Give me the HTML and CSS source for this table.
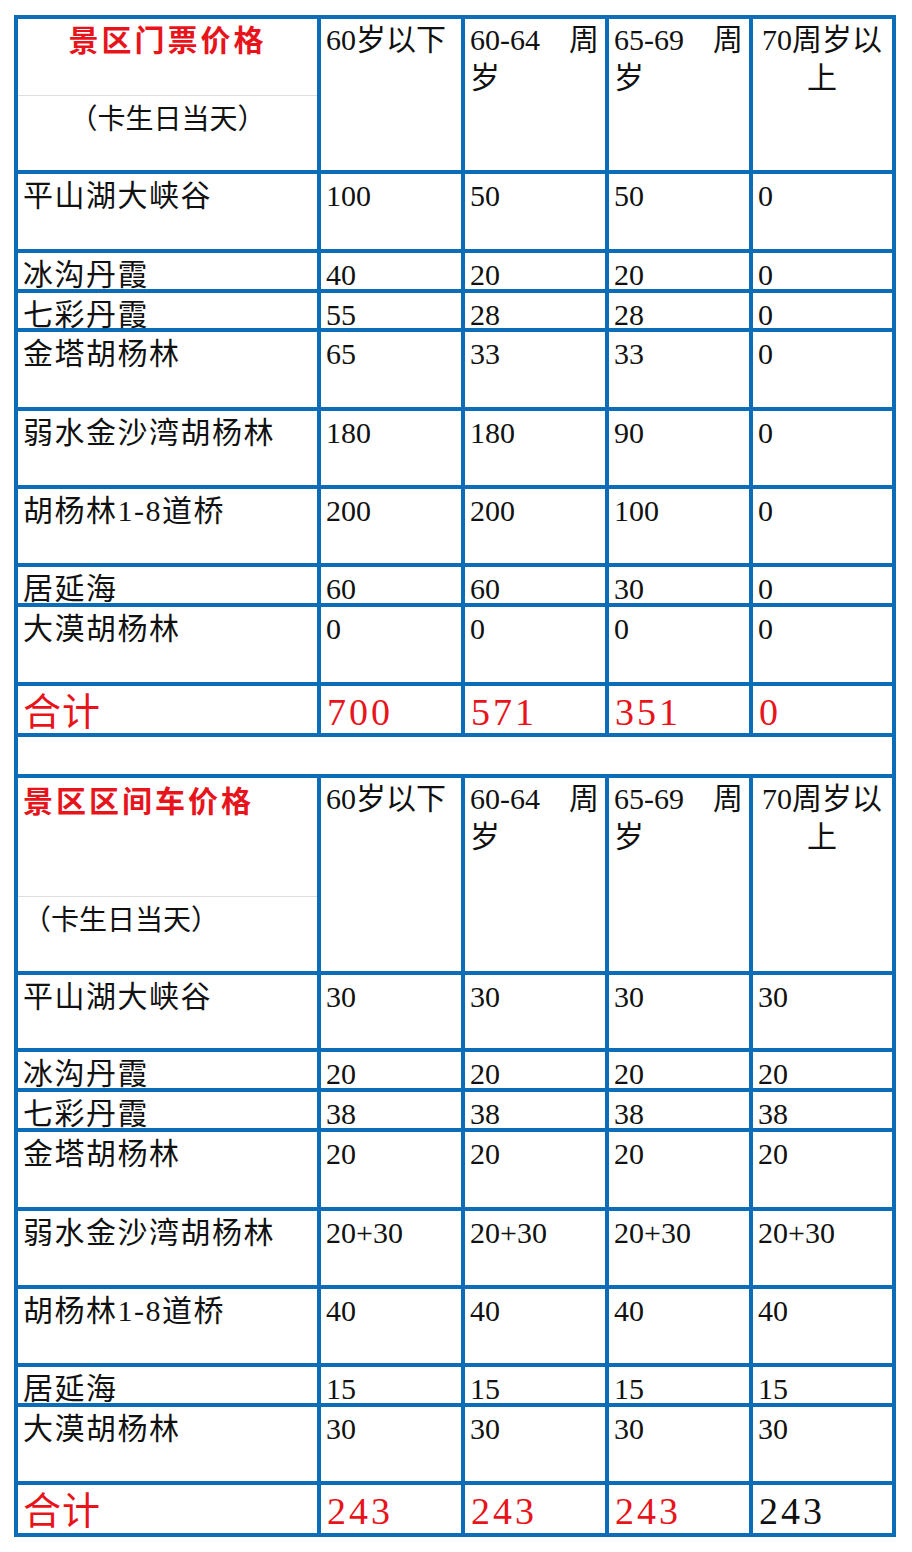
FILE: index.html
```html
<!DOCTYPE html>
<html lang="zh-CN">
<head>
<meta charset="utf-8">
<title>景区门票价格</title>
<link rel="stylesheet" href="styles.css">
</head>
<body>
<div class="sheet">
  <div class="cell title-cell">
    <div class="title-top title-top-1 red bold center">景区门票价格</div>
    <div class="title-sub center">（卡生日当天）</div>
  </div>
  <div class="cell head">60岁以下</div>
  <div class="cell head justify">60-64 周岁</div>
  <div class="cell head justify">65-69 周岁</div>
  <div class="cell head center">70周岁以上</div>

  <div class="cell name">平山湖大峡谷</div><div class="cell">100</div><div class="cell">50</div><div class="cell">50</div><div class="cell">0</div>
  <div class="cell name">冰沟丹霞</div><div class="cell">40</div><div class="cell">20</div><div class="cell">20</div><div class="cell">0</div>
  <div class="cell name">七彩丹霞</div><div class="cell">55</div><div class="cell">28</div><div class="cell">28</div><div class="cell">0</div>
  <div class="cell name">金塔胡杨林</div><div class="cell">65</div><div class="cell">33</div><div class="cell">33</div><div class="cell">0</div>
  <div class="cell name">弱水金沙湾胡杨林</div><div class="cell">180</div><div class="cell">180</div><div class="cell">90</div><div class="cell">0</div>
  <div class="cell name">胡杨林1-8道桥</div><div class="cell">200</div><div class="cell">200</div><div class="cell">100</div><div class="cell">0</div>
  <div class="cell name">居延海</div><div class="cell">60</div><div class="cell">60</div><div class="cell">30</div><div class="cell">0</div>
  <div class="cell name">大漠胡杨林</div><div class="cell">0</div><div class="cell">0</div><div class="cell">0</div><div class="cell">0</div>
  <div class="cell total red">合计</div><div class="cell total num red">700</div><div class="cell total num red">571</div><div class="cell total num red">351</div><div class="cell total num red">0</div>

  <div class="cell spacer"></div>

  <div class="cell title-cell">
    <div class="title-top title-top-2 red bold">景区区间车价格</div>
    <div class="title-sub">（卡生日当天）</div>
  </div>
  <div class="cell head">60岁以下</div>
  <div class="cell head justify">60-64 周岁</div>
  <div class="cell head justify">65-69 周岁</div>
  <div class="cell head center">70周岁以上</div>

  <div class="cell name">平山湖大峡谷</div><div class="cell">30</div><div class="cell">30</div><div class="cell">30</div><div class="cell">30</div>
  <div class="cell name">冰沟丹霞</div><div class="cell">20</div><div class="cell">20</div><div class="cell">20</div><div class="cell">20</div>
  <div class="cell name">七彩丹霞</div><div class="cell">38</div><div class="cell">38</div><div class="cell">38</div><div class="cell">38</div>
  <div class="cell name">金塔胡杨林</div><div class="cell">20</div><div class="cell">20</div><div class="cell">20</div><div class="cell">20</div>
  <div class="cell name">弱水金沙湾胡杨林</div><div class="cell">20+30</div><div class="cell">20+30</div><div class="cell">20+30</div><div class="cell">20+30</div>
  <div class="cell name">胡杨林1-8道桥</div><div class="cell">40</div><div class="cell">40</div><div class="cell">40</div><div class="cell">40</div>
  <div class="cell name">居延海</div><div class="cell">15</div><div class="cell">15</div><div class="cell">15</div><div class="cell">15</div>
  <div class="cell name">大漠胡杨林</div><div class="cell">30</div><div class="cell">30</div><div class="cell">30</div><div class="cell">30</div>
  <div class="cell total red">合计</div><div class="cell total num red">243</div><div class="cell total num red">243</div><div class="cell total num red">243</div><div class="cell total num">243</div>
</div>
</body>
</html>
```

FILE: styles.css
```css
html, body {
  margin: 0;
  padding: 0;
  background: #ffffff;
}

body {
  font-family: "Liberation Serif", "Noto Sans CJK SC", serif;
  color: #111111;
}

.sheet {
  margin: 15px 0 0 14px;
  width: 882px;
  box-sizing: border-box;
  display: grid;
  grid-template-columns: 299px 140px 140px 140px 139px;
  grid-template-rows:
    151px 75px 36px 35px 75px 74px 74px 36px 75px 47px
    37px
    193px 73px 36px 36px 75px 74px 74px 36px 74px 48px;
  gap: 4px;
  padding: 4px;
  background: #0b6db8;
}

.cell {
  background: #ffffff;
  font-size: 30px;
  line-height: 38px;
  padding: 3px 5px 0 5px;
  box-sizing: border-box;
  white-space: normal;
  overflow: visible;
}

.name {
  letter-spacing: 1.5px;
  white-space: nowrap;
}

.head {
  padding-top: 2px;
  padding-right: 6px;
}

.justify {
  text-align: justify;
}

.center {
  text-align: center;
}

.red {
  color: #e8141c;
}

.bold {
  font-weight: 700;
}

.title-cell {
  padding: 0;
  display: flex;
  flex-direction: column;
}

.title-top {
  box-sizing: border-box;
  border-bottom: 1px solid #dedede;
  letter-spacing: 3px;
  padding: 2px 5px 0 5px;
}

.title-top-1 {
  height: 77px;
  padding-top: 3px;
}

.title-top-2 {
  height: 119px;
  padding-top: 5px;
}

.title-sub {
  font-size: 28px;
  padding: 5px 5px 0 5px;
}

.total {
  font-size: 38px;
  line-height: 44px;
  padding-top: 4px;
  letter-spacing: 1px;
}

.total.num {
  letter-spacing: 3px;
  padding-left: 6px;
}

.spacer {
  grid-column: 1 / -1;
}
```
